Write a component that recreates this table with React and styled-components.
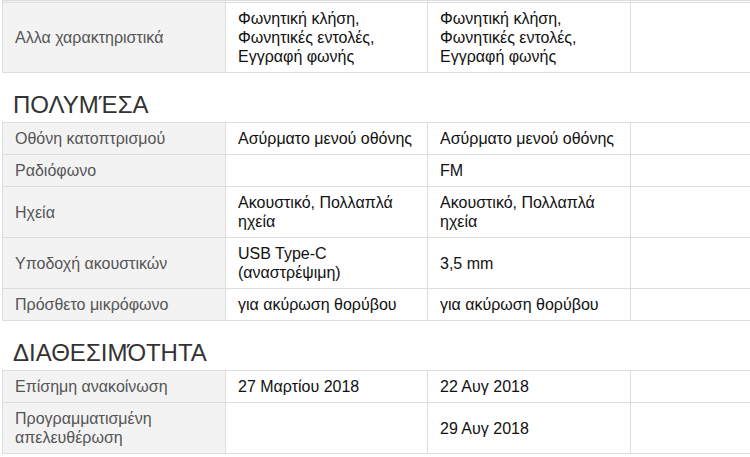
import React from 'react';
import styled, { createGlobalStyle } from 'styled-components';

const GlobalStyle = createGlobalStyle`
  html, body {
    margin: 0;
    padding: 0;
    background: #fff;
    overflow: hidden;
  }
  body {
    font-family: "Liberation Sans", Arial, sans-serif;
  }
`;

const Page = styled.div`
  width: 840px;
  padding: 0 0 0 2px;
`;

const SectionTitle = styled.h2`
  margin: 18px 0 3px;
  padding-left: 11px;
  font-size: 24px;
  line-height: 28px;
  font-weight: normal;
  color: #333;
`;

const SpecTable = styled.table`
  width: 832px;
  table-layout: fixed;
  border-collapse: collapse;
  font-size: 16px;
  line-height: 19px;
`;

const Cell = styled.td`
  border: 1px solid #dddddd;
  padding: 6px 12px;
  vertical-align: middle;
  color: #111;
`;

const LabelCell = styled(Cell)`
  color: #555;
  background-color: #f3f3f3;
  background-image: repeating-conic-gradient(#efefef 0 25%, #f6f6f6 0 50%);
  background-size: 4px 4px;
`;

const Sliver = styled.tr`
  td {
    padding: 0;
    height: 1px;
  }
`;

const specs = [
  {
    title: null,
    rows: [
      ['Αλλα χαρακτηριστικά', 'Φωνητική κλήση, Φωνητικές εντολές, Εγγραφή φωνής', 'Φωνητική κλήση, Φωνητικές εντολές, Εγγραφή φωνής'],
    ],
  },
  {
    title: 'ΠΟΛΥΜΈΣΑ',
    rows: [
      ['Οθόνη κατοπτρισμού', 'Ασύρματο μενού οθόνης', 'Ασύρματο μενού οθόνης'],
      ['Ραδιόφωνο', '', 'FM'],
      ['Ηχεία', 'Ακουστικό, Πολλαπλά ηχεία', 'Ακουστικό, Πολλαπλά ηχεία'],
      ['Υποδοχή ακουστικών', 'USB Type-C (αναστρέψιμη)', '3,5 mm'],
      ['Πρόσθετο μικρόφωνο', 'για ακύρωση θορύβου', 'για ακύρωση θορύβου'],
    ],
  },
  {
    title: 'ΔΙΑΘΕΣΙΜΌΤΗΤΑ',
    rows: [
      ['Επίσημη ανακοίνωση', '27 Μαρτίου 2018', '22 Αυγ 2018'],
      ['Προγραμματισμένη απελευθέρωση', '', '29 Αυγ 2018'],
    ],
  },
];

const Columns = () => (
  <colgroup>
    <col style={{ width: 223 }} />
    <col style={{ width: 202 }} />
    <col style={{ width: 203 }} />
    <col style={{ width: 204 }} />
  </colgroup>
);

const Section = ({ title, rows, cut }) => (
  <>
    {title && <SectionTitle>{title}</SectionTitle>}
    <SpecTable>
      <Columns />
      <tbody>
        {cut && (
          <Sliver>
            <LabelCell />
            <Cell />
            <Cell />
            <Cell />
          </Sliver>
        )}
        {rows.map(([label, a, b]) => (
          <tr key={label}>
            <LabelCell>{label}</LabelCell>
            <Cell>{a}</Cell>
            <Cell>{b}</Cell>
            <Cell />
          </tr>
        ))}
      </tbody>
    </SpecTable>
  </>
);

const App = () => (
  <Page>
    <GlobalStyle />
    {specs.map((s, i) => (
      <Section key={s.title || 'top'} title={s.title} rows={s.rows} cut={i === 0} />
    ))}
  </Page>
);

export default App;
